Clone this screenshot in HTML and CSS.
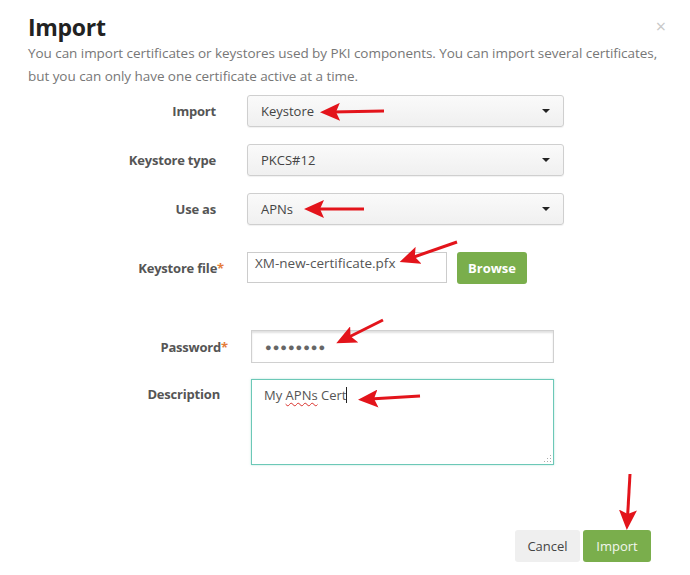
FILE: index.html
```html
<!DOCTYPE html>
<html lang="en">
<head>
    <meta charset="UTF-8">
    <meta name="viewport" content="width=device-width, initial-scale=1.0">
    <title>Import</title>
    <link rel="stylesheet" href="styles.css">
</head>
<body>

    <div class="modal">
        <span class="close">&times;</span>

        <h1>Import</h1>
        <p class="intro">You can import certificates or keystores used by PKI components. You can import several certificates, but you can only have one certificate active at a time.</p>

        <div class="form">
            <div class="row row-select">
                <label>Import</label>
                <div class="select">Keystore</div>
            </div>

            <div class="row row-select">
                <label>Keystore type</label>
                <div class="select">PKCS#12</div>
            </div>

            <div class="row row-select">
                <label>Use as</label>
                <div class="select">APNs</div>
            </div>

            <div class="row row-file">
                <label>Keystore file<span class="req">*</span></label>
                <div class="file-group">
                    <div class="file-input">XM-new-certificate.pfx</div>
                    <button class="btn btn-green">Browse</button>
                </div>
            </div>

            <div class="row row-shift row-password">
                <label>Password<span class="req">*</span></label>
                <div class="password">&#9679;&#9679;&#9679;&#9679;&#9679;&#9679;&#9679;&#9679;</div>
            </div>

            <div class="row row-shift row-desc">
                <label>Description</label>
                <div class="textarea">
                    My <span class="typo">APNs</span> Cert<span class="caret"></span>
                    <span class="grip"></span>
                </div>
            </div>
        </div>

        <div class="actions">
            <button class="btn btn-light">Cancel</button>
            <button class="btn btn-green btn-import">Import</button>
        </div>

        <!-- red call-out arrows -->
        <svg class="arrows" width="690" height="575" viewBox="0 0 690 575">
            <defs>
                <marker id="head" markerUnits="userSpaceOnUse" viewBox="0 0 20 18" markerWidth="20" markerHeight="18" refX="8" refY="9" orient="auto">
                    <path d="M0,0 L20,9 L0,18 L4,9 Z" fill="#e3141b"/>
                </marker>
            </defs>
            <g stroke="#e3141b" stroke-width="3" marker-end="url(#head)">
                <line x1="384" y1="111" x2="332" y2="112"/>
                <line x1="364" y1="209" x2="316" y2="209"/>
                <line x1="457" y1="242" x2="411" y2="258"/>
                <line x1="383" y1="320" x2="347" y2="338"/>
                <line x1="420" y1="396" x2="370" y2="399"/>
                <line x1="630" y1="474" x2="627.5" y2="518"/>
            </g>
        </svg>
    </div>

</body>
</html>
```

FILE: styles.css
```css
*{
    padding: 0;
    margin: 0;
    box-sizing: border-box;
}

body {
    background-color: #fff;
    font-family: "Open Sans", "Liberation Sans", sans-serif;
    color: #444;
}

.modal {
    position: relative;
    width: 690px;
    height: 575px;
    padding: 12px 0 0 28px;
}

.close {
    position: absolute;
    top: 14px;
    right: 24px;
    font-size: 18px;
    color: #c8c8c8;
}

h1 {
    font-size: 23px;
    font-weight: bold;
    color: #222;
    line-height: 30px;
    letter-spacing: -0.3px;
}

.intro {
    font-size: 13.5px;
    line-height: 23px;
    color: #777;
    letter-spacing: -0.05px;
    width: 632px;
}

.form {
    margin-top: 7px;
    margin-left: -28px;
    display: flex;
    flex-direction: column;
}

.row {
    display: grid;
    grid-template-columns: 224px auto;
    column-gap: 23px;
    align-items: center;
}

.row label {
    text-align: right;
    padding-right: 8px;
    font-size: 13px;
    font-weight: bold;
    letter-spacing: -0.2px;
    color: #555;
}

.req {
    color: #e57c3a;
    margin-right: -8px;
}

.row-select {
    margin-bottom: 17px;
}

.select {
    position: relative;
    width: 317px;
    height: 32px;
    line-height: 30px;
    padding-left: 13px;
    font-size: 13px;
    color: #444;
    border: 1px solid #cfcfcf;
    border-radius: 3px;
    background: linear-gradient(#fafafa, #f0f0f0);
    box-shadow: 0 1px 1px rgba(0, 0, 0, 0.06);
}

.select::after {
    content: "";
    position: absolute;
    right: 13px;
    top: 13px;
    border-left: 4px solid transparent;
    border-right: 4px solid transparent;
    border-top: 4px solid #222;
}

.row-file {
    margin-top: 10px;
}

.file-group {
    display: flex;
    align-items: flex-start;
    gap: 10px;
}

.file-input {
    width: 200px;
    height: 31px;
    padding: 1px 0 0 7px;
    line-height: 18px;
    font-size: 13.5px;
    color: #555;
    border: 1px solid #ccc;
}

.btn {
    font-family: "Open Sans", "Liberation Sans", sans-serif;
    font-size: 13px;
    border: none;
    border-radius: 3px;
    height: 32px;
    cursor: pointer;
}

.btn-green {
    background-color: #7aae4c;
    color: #fff;
    font-weight: bold;
    width: 70px;
}

.row-shift {
    margin-left: 4px;
}

.row-password {
    margin-top: 46px;
}

.password {
    width: 303px;
    height: 33px;
    line-height: 31px;
    padding-left: 13px;
    font-size: 11px;
    letter-spacing: 1px;
    color: #666;
    border: 1px solid #d0d0d0;
    box-shadow: inset 0 2px 2px rgba(0, 0, 0, 0.12);
}

.row-desc {
    margin-top: 16px;
    align-items: start;
}

.row-desc label {
    margin-top: 6px;
}

.textarea {
    position: relative;
    width: 303px;
    height: 86px;
    padding: 6px 12px;
    font-size: 13px;
    color: #555;
    border: 1px solid #6cc8b7;
    box-shadow: 0 0 2px rgba(108, 200, 183, 0.5);
}

.typo {
    text-decoration: underline wavy #d9302b;
    text-decoration-thickness: 1px;
    text-underline-offset: 2px;
}

.caret {
    display: inline-block;
    width: 1px;
    height: 16px;
    background-color: #222;
    vertical-align: -3px;
}

.grip {
    position: absolute;
    right: 2px;
    bottom: 2px;
    width: 8px;
    height: 8px;
    background-image: radial-gradient(circle, #aaa 0.8px, transparent 1px);
    background-size: 3px 3px;
    clip-path: polygon(100% 0, 100% 100%, 0 100%);
}

.actions {
    position: absolute;
    right: 39px;
    top: 530px;
    display: flex;
    gap: 3px;
}

.btn-light {
    background-color: #efefef;
    color: #444;
    width: 65px;
}

.btn-import {
    font-weight: normal;
    color: #f2f6ee;
    width: 68px;
}

.arrows {
    position: absolute;
    top: 0;
    left: 0;
    pointer-events: none;
}
```
